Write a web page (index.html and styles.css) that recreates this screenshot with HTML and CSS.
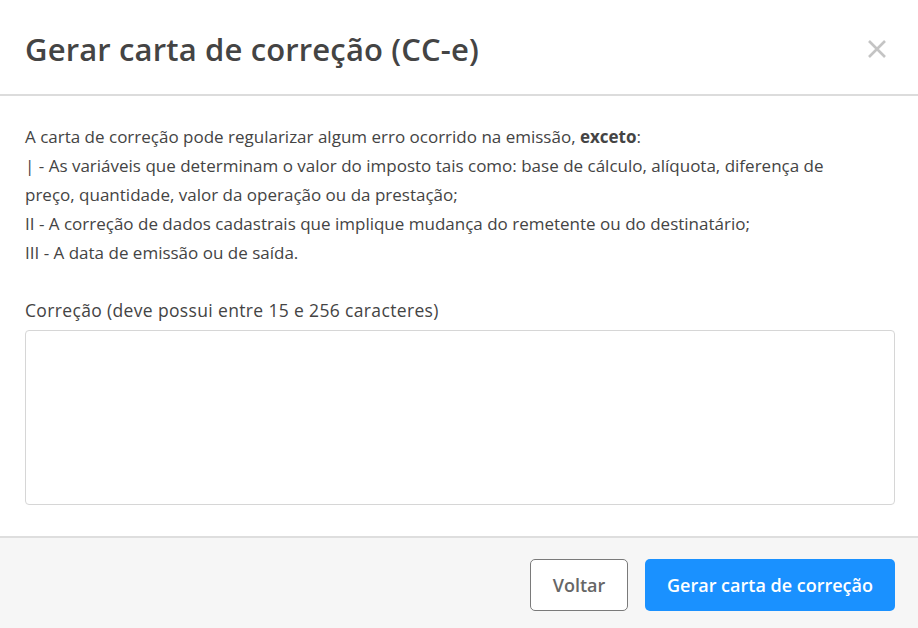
FILE: index.html
```html
<!DOCTYPE html>
<html lang="pt-BR">
<head>
<meta charset="utf-8">
<title>Gerar carta de correção (CC-e)</title>
<link rel="stylesheet" href="styles.css">
</head>
<body>
<div class="modal">
  <header class="modal-header">
    <h1 class="modal-title">Gerar carta de correção (CC-e)</h1>
    <button class="close" aria-label="Fechar">
      <svg width="20" height="20" viewBox="0 0 20 20"><path d="M2 2 L18 18 M18 2 L2 18" stroke="#c4c4c4" stroke-width="2.6" stroke-linecap="butt" fill="none"/></svg>
    </button>
  </header>
  <main class="modal-body">
    <p class="info">A carta de correção pode regularizar algum erro ocorrido na emissão, <strong>exceto</strong>:<br>
| - As variáveis que determinam o valor do imposto tais como: base de cálculo, alíquota, diferença de preço, quantidade, valor da operação ou da prestação;<br>
II - A correção de dados cadastrais que implique mudança do remetente ou do destinatário;<br>
III - A data de emissão ou de saída.</p>
    <label class="field-label" for="correcao">Correção (deve possui entre 15 e 256 caracteres)</label>
    <textarea id="correcao" class="field"></textarea>
  </main>
  <footer class="modal-footer">
    <button class="btn btn-secondary">Voltar</button>
    <button class="btn btn-primary">Gerar carta de correção</button>
  </footer>
</div>
</body>
</html>
```
FILE: styles.css
```css
* { box-sizing: border-box; }
html, body { margin: 0; padding: 0; background: #fff; }
body { font-family: "Open Sans", sans-serif; color: #444; }
.modal { width: 918px; height: 628px; display: flex; flex-direction: column; }
.modal-header {
  height: 96px;
  display: flex; align-items: center; justify-content: space-between;
  padding: 4px 31px 0 25px;
  border-bottom: 2px solid #dcdcdc;
}
.modal-title {
  margin: 0; font-family: "Open Sans", sans-serif; font-weight: 600;
  font-size: 31px; color: #444; letter-spacing: 0.15px;
}
.close { background: none; border: 0; padding: 0; width: 20px; height: 20px; cursor: pointer; display: flex; }
.modal-body { padding: 26px 23px 0 25px; flex: 1; }
.info { margin: 0; max-width: 845px; font-size: 17px; line-height: 29px; color: #444; }
.info strong { font-weight: 700; }
.field-label { display: block; margin-top: 32px; font-size: 17.5px; line-height: 22px; color: #444; font-weight: 500; letter-spacing: 0.35px; }
.field {
  display: block; width: 870px; height: 175px; margin-top: 9px;
  border: 1px solid #d6d6d6; border-radius: 4px; resize: none; font: inherit;
}
.modal-footer {
  height: 92px; background: #f6f6f6; border-top: 2px solid #dedede;
  display: flex; justify-content: flex-end; align-items: center; gap: 17px;
  padding: 4px 23px 0 0;
}
.btn { height: 52px; border-radius: 5px; font-family: "Open Sans", sans-serif; font-weight: 600; font-size: 18px; cursor: pointer; }
.btn-secondary { width: 98px; background: #fff; border: 1.5px solid #7a7a7a; color: #666; }
.btn-primary { width: 250px; background: #1a91ff; border: 0; color: #fff; }
```
